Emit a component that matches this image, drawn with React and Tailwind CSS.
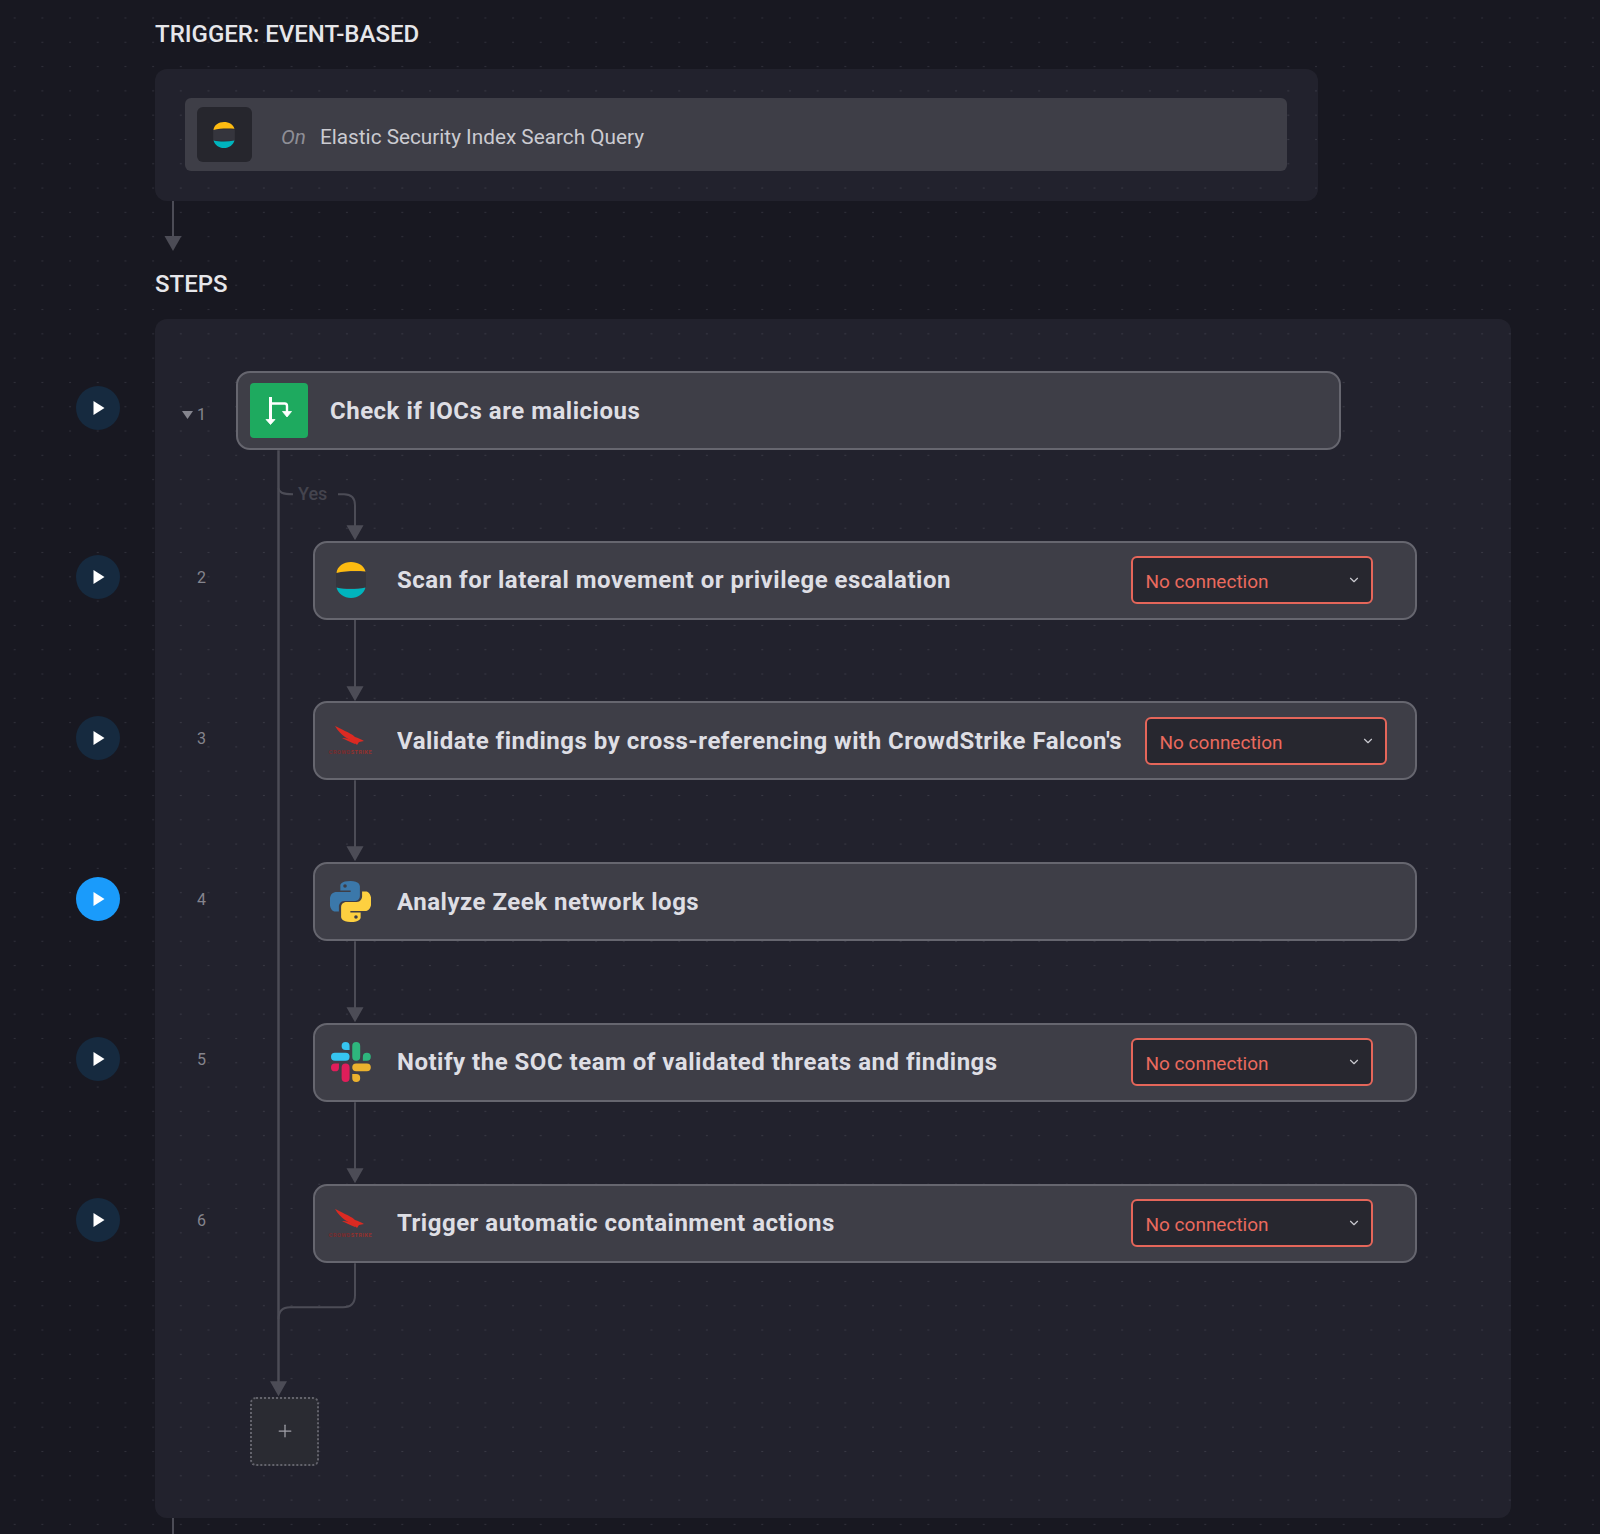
import React from "react";
import { ChevronDown, Plus } from "lucide-react";

function ElasticIcon({ className }) {
  return (
    <svg viewBox="0 0 30 36" className={className}>
      <path d="M0 10h30v16H0z" fill="#35353d" />
      <path d="M0.500 11C1 4.500 7.500 0 15 0c7 0 13 3.500 14.500 9.500C20 8.500 9 9 0.500 11Z" fill="#fdbb11" />
      <path d="M0.500 25.500C9 27.500 20 27.500 29.500 25.500 28 31.500 22 36 15 36 8 36 2 31.500 0.500 25.500Z" fill="#00b4bd" />
    </svg>
  );
}

function CrowdStrikeIcon() {
  return (
    <div className="flex w-[44px] flex-col items-center">
      <svg viewBox="0 0 30 20" className="ml-[-1px] h-[20px] w-[30px]">
        <path d="M0 0C3 1 6 3 10 5C14 7 17 8 20 11C23 12 26 13 29 15L24 16L22 19L20 17C17 15 13 13 10 11C6 8 3 5 0 0Z" fill="#dc2a22" />
        <path d="M7 12C11 12 16 13 21 17L20 18C15 16 11 14 7 12Z" fill="#dc2a22" />
      </svg>
      <div className="mt-[3px] text-[5.500px] leading-[6px] font-bold tracking-[0.5px] whitespace-nowrap text-[#7c2a2c]">
        CROWD<span className="text-[#96302c]">STRIKE</span>
      </div>
    </div>
  );
}

function PythonIcon() {
  const d =
    "M54.900 0C26 0 27.800 12.600 27.800 12.600l0 13h27.600v3.900H16.900S-1 27.500-1 55.300c0 27.800 15.600 26.800 15.600 26.800h9.300V69.200s-.5-15.600 15.300-15.600h26.200s14.800.2 14.800-14.300V15.700S82.500 0 54.900 0ZM40.300 8.400a4.800 4.800 0 1 1 0 9.600 4.800 4.800 0 0 1 0-9.600Z";
  return (
    <svg viewBox="0 0 110 110" className="h-[41px] w-[41px]">
      <path d={d} fill="#3b78aa" fillRule="evenodd" />
      <path d={d} fill="#fdd040" fillRule="evenodd" transform="rotate(180 55 55)" />
    </svg>
  );
}

function SlackIcon() {
  return (
    <svg viewBox="0 0 54 54" className="h-[40px] w-[40px]">
      <path d="M19.712.133a5.381 5.381 0 0 0-5.376 5.387 5.381 5.381 0 0 0 5.376 5.386h5.376V5.520A5.381 5.381 0 0 0 19.712.133m0 14.365H5.376A5.381 5.381 0 0 0 0 19.884a5.381 5.381 0 0 0 5.376 5.387h14.336a5.381 5.381 0 0 0 5.376-5.387 5.381 5.381 0 0 0-5.376-5.386" fill="#36c5f0" />
      <path d="M53.760 19.884a5.381 5.381 0 0 0-5.376-5.386 5.381 5.381 0 0 0-5.376 5.386v5.387h5.376a5.381 5.381 0 0 0 5.376-5.387m-14.336 0V5.520A5.381 5.381 0 0 0 34.048.133a5.381 5.381 0 0 0-5.376 5.387v14.364a5.381 5.381 0 0 0 5.376 5.387 5.381 5.381 0 0 0 5.376-5.387" fill="#2eb67d" />
      <path d="M34.048 54a5.381 5.381 0 0 0 5.376-5.387 5.381 5.381 0 0 0-5.376-5.386h-5.376v5.386A5.381 5.381 0 0 0 34.048 54m0-14.365h14.336a5.381 5.381 0 0 0 5.376-5.386 5.381 5.381 0 0 0-5.376-5.387H34.048a5.381 5.381 0 0 0-5.376 5.387 5.381 5.381 0 0 0 5.376 5.386" fill="#ecb22e" />
      <path d="M0 34.249a5.381 5.381 0 0 0 5.376 5.386 5.381 5.381 0 0 0 5.376-5.386v-5.387H5.376A5.381 5.381 0 0 0 0 34.250m14.336-.001v14.364A5.381 5.381 0 0 0 19.712 54a5.381 5.381 0 0 0 5.376-5.387V34.250a5.381 5.381 0 0 0-5.376-5.387 5.381 5.381 0 0 0-5.376 5.387" fill="#e01e5a" />
    </svg>
  );
}

function BranchIcon() {
  return (
    <svg viewBox="0 0 58 55" className="h-[55px] w-[58px]" fill="none">
      <path d="M20.500 14V37" stroke="#fff" strokeWidth="3" />
      <path d="M20.500 20.500H34.700Q37 20.500 37 23V30" stroke="#fff" strokeWidth="2.400" />
      <path d="M16 36.500H25L20.500 41.500Z M32.500 28.500H41.500L37 34Z" fill="#fff" stroke="#fff" strokeWidth="0.800" />
    </svg>
  );
}

function PlayButton({ active }) {
  return (
    <div
      className={`mt-[14.5px] -ml-[79px] flex h-[44px] w-[44px] shrink-0 items-center justify-center rounded-full ${
        active ? "bg-[#1a9bfb]" : "bg-[#162a3f]"
      }`}
    >
      <svg viewBox="0 0 12 14" className="ml-[1px] h-[14px] w-[12px]">
        <path d="M0.500 0L11.500 7L0.500 14Z" fill="#fff" />
      </svg>
    </div>
  );
}

function NoConnection({ marginRight }) {
  return (
    <div
      className={`ml-[23px] flex h-[48px] w-[242px] shrink-0 items-center justify-between rounded-[6px] border-2 border-[#e5665a] bg-[#27272f] pr-[10px] pl-[13px] text-[19px] text-[#ea6a5e] ${marginRight}`}
    >
      <span className="pt-[4px]">No connection</span>
      <ChevronDown size={14} strokeWidth={2} className="text-[#c9c9cf]" />
    </div>
  );
}

function Step({ number, icon, title, active, select, marginRight = "mr-[42px]" }) {
  return (
    <div className="flex">
      <PlayButton active={active} />
      <div className="mt-[27.5px] w-[86px] shrink-0 text-right text-[16px] leading-[20px] text-[#85858e]">{number}</div>
      <div className="ml-[106.5px] flex h-[79px] w-[1104px] shrink-0 items-center rounded-[14px] border-2 border-[#66666f] bg-[#3e3e47] pl-[15.5px]">
        <div className="flex h-[41px] w-[41px] shrink-0 items-center justify-center">{icon}</div>
        <div className="ml-[26px] min-w-0 flex-1 overflow-hidden text-[24px] font-bold tracking-[0.5px] whitespace-nowrap text-[#dedee4]">
          {title}
        </div>
        {select && <NoConnection marginRight={marginRight} />}
      </div>
    </div>
  );
}

const LINE = "#4c4c56";

function Connectors() {
  const head = (x, tip) => `M${x - 8.500} ${tip - 15}H${x + 8.500}L${x} ${tip}Z`;
  return (
    <svg viewBox="155 319 1356 1198" className="pointer-events-none absolute inset-0 h-full w-full" fill="none">
      <path d="M278.500 450V1385" stroke={LINE} strokeWidth="2.500" />
      <path d="M278.500 488C279 492 282 494 293 494" stroke={LINE} strokeWidth="2" />
      <path d="M338 494H344C351 494 355 498 355 505V527" stroke={LINE} strokeWidth="2" />
      <path d="M355 619V690M355 780V850M355 941V1011M355 1102V1172" stroke={LINE} strokeWidth="2" />
      <path d="M355 1263V1295C355 1303 351 1307 343 1307H290C282 1307 278.500 1311 278.500 1319" stroke={LINE} strokeWidth="2" />
      <path d={`${head(355, 540)}${head(355, 701)}${head(355, 861)}${head(355, 1022)}${head(355, 1183)}${head(278.500, 1396)}`} fill={LINE} />
    </svg>
  );
}

const dots =
  "bg-[radial-gradient(circle,#2f2f39_0.9px,transparent_1.1px)] bg-[length:27.7px_24.3px] bg-[position:0.85px_5.85px]";

export default function App() {
  return (
    <div className={`min-h-[1534px] w-full overflow-hidden bg-[#181821] font-['Roboto',sans-serif] ${dots}`}>
      <div className="pt-[18px] pl-[155px]">
        <h2 className="text-[24px] leading-[32px] font-medium text-[#e6e6ea]">TRIGGER: EVENT-BASED</h2>

        <div className="mt-[19px] h-[132px] w-[1163px] rounded-[12px] bg-[#c8c8f0]/[0.06] py-[29px] pr-[31px] pl-[29.5px]">
          <div className="flex h-[73px] items-center rounded-[6px] bg-[#3e3e47] pl-[12px]">
            <div className="flex h-[55px] w-[55px] items-center justify-center rounded-[6px] bg-[#26262d]">
              <ElasticIcon className="h-[26px] w-[22px]" />
            </div>
            <span className="ml-[29.5px] pt-[6px] text-[20.75px] text-[#8e8e96] italic">On</span>
            <span className="ml-[14px] pt-[6px] text-[20.75px] text-[#cbcbd1]">Elastic Security Index Search Query</span>
          </div>
        </div>

        <svg viewBox="0 0 18 50" className="ml-[9px] block h-[50px] w-[18px]" fill="none">
          <path d="M9 0V36" stroke={LINE} strokeWidth="2" />
          <path d="M0.500 35H17.500L9 50Z" fill={LINE} />
        </svg>

        <h2 className="mt-[17px] text-[24px] leading-[32px] font-medium text-[#e6e6ea]">STEPS</h2>

        <div className="relative mt-[19px] w-[1356px] rounded-[12px] bg-[#c8c8f0]/[0.06] pt-[52px] pb-[52px]">
          <Connectors />
          <span className="absolute top-[163px] left-[143px] text-[18px] leading-[24px] font-medium text-[#44444e]">Yes</span>

          <div className="relative flex">
            <PlayButton />
            <div className="mt-[33.5px] flex w-[86px] shrink-0 items-center justify-end gap-[4px] self-start text-[16px] leading-[20px] text-[#85858e]">
              <svg viewBox="0 0 11 8" className="h-[8px] w-[11px]">
                <path d="M0 0H11L5.500 8Z" fill="#85858e" />
              </svg>
              1
            </div>
            <div className="ml-[30px] flex h-[79px] w-[1105px] shrink-0 items-center rounded-[14px] border-2 border-[#66666f] bg-[#3e3e47] pl-[12px]">
              <div className="h-[55px] w-[58px] shrink-0 rounded-[4px] bg-[#1eaa5f]">
                <BranchIcon />
              </div>
              <div className="ml-[22px] text-[24px] font-bold tracking-[0.5px] whitespace-nowrap text-[#dedee4]">
                Check if IOCs are malicious
              </div>
            </div>
          </div>

          <div className="relative mt-[90.5px] flex flex-col gap-[81.75px]">
            <Step number="2" icon={<ElasticIcon className="h-[36px] w-[30px]" />} title="Scan for lateral movement or privilege escalation" select />
            <Step number="3" icon={<CrowdStrikeIcon />} title="Validate findings by cross-referencing with CrowdStrike Falcon's" select marginRight="mr-[28px]" />
            <Step number="4" icon={<PythonIcon />} title="Analyze Zeek network logs" active />
            <Step number="5" icon={<SlackIcon />} title="Notify the SOC team of validated threats and findings" select />
            <Step number="6" icon={<CrowdStrikeIcon />} title="Trigger automatic containment actions" select />
          </div>

          <div className="relative mt-[134px] ml-[95px] flex h-[69px] w-[69px] items-center justify-center rounded-[6px] border-2 border-dotted border-[#63636c] bg-[#2a2b32] text-[#a0a0a8]">
            <Plus size={20} strokeWidth={1.500} />
          </div>
        </div>

        <div className="ml-[17px] h-[17px] w-[2px] bg-[#4c4c56]" />
      </div>
    </div>
  );
}
